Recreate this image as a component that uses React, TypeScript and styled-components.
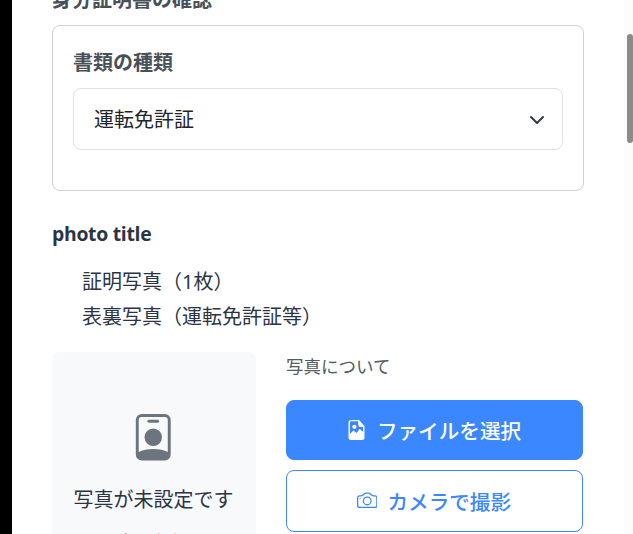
import React from 'react';
import styled, { createGlobalStyle, css } from 'styled-components';
import { BsCamera } from 'react-icons/bs';

const GlobalStyle = createGlobalStyle`
  * { box-sizing: border-box; }
  body {
    margin: 0;
    overflow: hidden;
    background: #fff;
    color: #2b3445;
    font: 20px/30px "Noto Sans", "Noto Sans CJK JP", sans-serif;
  }
`;

const Page = styled.div`
  display: flex;
  height: 534px;
  overflow: hidden;
`;

const Backdrop = styled.div`
  flex: 0 0 12px;
  background: #000;
`;

const Content = styled.main`
  flex: 1;
  min-width: 0;
  padding: 0 40px;
`;

const ScrollTrack = styled.div`
  flex: 0 0 9px;
  padding: 34px 0 0 3px;
  background: #fcfcfc;
`;

const ScrollThumb = styled.div`
  height: 109px;
  border-radius: 3px;
  background: #8b8b8b;
`;

const SectionTitle = styled.h2`
  margin: -15px 0 10px;
  font-size: 20px;
  line-height: 30px;
  font-weight: 700;
  color: #495057;
`;

const Card = styled.section`
  height: 166px;
  padding: 21px 20px;
  border: 1px solid #ced0d3;
  border-radius: 8px;
`;

const Label = styled.div`
  height: 41px;
  line-height: 31px;
  font-weight: 700;
  color: #495057;
`;

const Select = styled.div`
  display: flex;
  align-items: center;
  justify-content: space-between;
  height: 62px;
  padding: 1px 17px 0 20px;
  border: 1px solid #dee0e5;
  border-radius: 8px;
  color: #212529;
`;

const PhotoTitle = styled.h3`
  margin: 28px 0 15px;
  font: 700 19.4px/30px "Open Sans", "Noto Sans", sans-serif;
  letter-spacing: -0.3px;
`;

const PhotoList = styled.ul`
  margin: 0 0 18px;
  padding: 0 0 0 30px;
  list-style: none;
  line-height: 35px;
`;

const PhotoRow = styled.div`
  display: grid;
  grid-template-columns: 204px 297px;
  column-gap: 30px;
`;

const Preview = styled.div`
  display: flex;
  flex-direction: column;
  align-items: center;
  height: 260px;
  padding: 62px 1px 0 0;
  border-radius: 8px;
  background: #f8f9fb;
  white-space: nowrap;
`;

const BadgeIcon = styled.svg`
  width: 46.5px;
  height: 46.5px;
  margin-bottom: 24px;
  color: #6c757d;
`;

const RequiredNote = styled.div`
  margin-top: 13px;
  font-size: 17.5px;
  line-height: 26px;
  color: #dc3545;
`;

const Actions = styled.div`
  display: flex;
  flex-direction: column;
`;

const Caption = styled.div`
  height: 48px;
  font-size: 17.5px;
  line-height: 29px;
  color: #555b60;
`;

const Button = styled.button<{ $filled?: boolean }>`
  display: flex;
  align-items: center;
  justify-content: center;
  gap: 10px;
  height: 62px;
  padding: 0 1px 1px 0;
  border: 1px solid #3b87ff;
  border-radius: 8px;
  background: #fff;
  color: #3b87ff;
  font: 500 20.6px/30px "Noto Sans CJK JP", sans-serif;
  ${({ $filled }) => $filled && css`
    height: 60px;
    margin-bottom: 10px;
    background: #3b87ff;
    color: #fff;
  `}
`;

function ChevronIcon() {
  return (
    <svg width="16" height="16" viewBox="0 0 16 16" fill="none" stroke="#343a40" strokeWidth="2" strokeLinecap="round" strokeLinejoin="round" aria-hidden="true">
      <path d="M2 5l6 6 6-6" />
    </svg>
  );
}

/* Name badge with a slot at the top and solid shoulders along the bottom. */
function PersonBadgeIcon() {
  return (
    <BadgeIcon viewBox="0 0 16 16" fill="currentColor" aria-hidden="true">
      <path
        fillRule="evenodd"
        d="M4 0H12A2 2 0 0 1 14 2V14A2 2 0 0 1 12 16H4A2 2 0 0 1 2 14V2A2 2 0 0 1 4 0ZM4 1A1 1 0 0 0 3 2V13.1C4.2 12.35 6 12 8 12S11.8 12.35 13 13.1V2A1 1 0 0 0 12 1Z"
      />
      <rect x="6" y="2" width="4" height="1" rx="0.5" />
      <circle cx="8" cy="8" r="3" />
    </BadgeIcon>
  );
}

/* Document with a folded corner; the photo area is cut out of the solid page. */
function PhotoFileIcon() {
  return (
    <svg width="20" height="20" viewBox="0 0 20 20" fill="currentColor" aria-hidden="true">
      <path
        fillRule="evenodd"
        d="M4 0H12L17.5 6.2V17.5A2.5 2.5 0 0 1 15 20H4A2.5 2.5 0 0 1 1.5 17.5V2.5A2.5 2.5 0 0 1 4 0ZM4 1.3Q2.9 1.3 2.9 2.5V14L6.2 10.8Q6.6 10.5 7.1 10.9L9.7 13L12 9.4Q12.5 8.8 13.2 9.3L16.1 12V7H13.5Q11.2 7 11.2 4.5V1.3Z"
      />
      <circle cx="7.4" cy="6.8" r="2.1" />
    </svg>
  );
}

export default function App() {
  return (
    <>
      <GlobalStyle />
      <Page lang="ja">
        <Backdrop />
        <Content>
          <SectionTitle>身分証明書の確認</SectionTitle>
          <Card>
            <Label>書類の種類</Label>
            <Select>
              運転免許証
              <ChevronIcon />
            </Select>
          </Card>
          <PhotoTitle>photo title</PhotoTitle>
          <PhotoList>
            <li>証明写真（1枚）</li>
            <li>表裏写真（運転免許証等）</li>
          </PhotoList>
          <PhotoRow>
            <Preview>
              <PersonBadgeIcon />
              <div>写真が未設定です</div>
              <RequiredNote>※写真は必須です</RequiredNote>
            </Preview>
            <Actions>
              <Caption>写真について</Caption>
              <Button $filled>
                <PhotoFileIcon />
                ファイルを選択
              </Button>
              <Button>
                <BsCamera size={20.5} />
                カメラで撮影
              </Button>
            </Actions>
          </PhotoRow>
        </Content>
        <ScrollTrack>
          <ScrollThumb />
        </ScrollTrack>
      </Page>
    </>
  );
}
